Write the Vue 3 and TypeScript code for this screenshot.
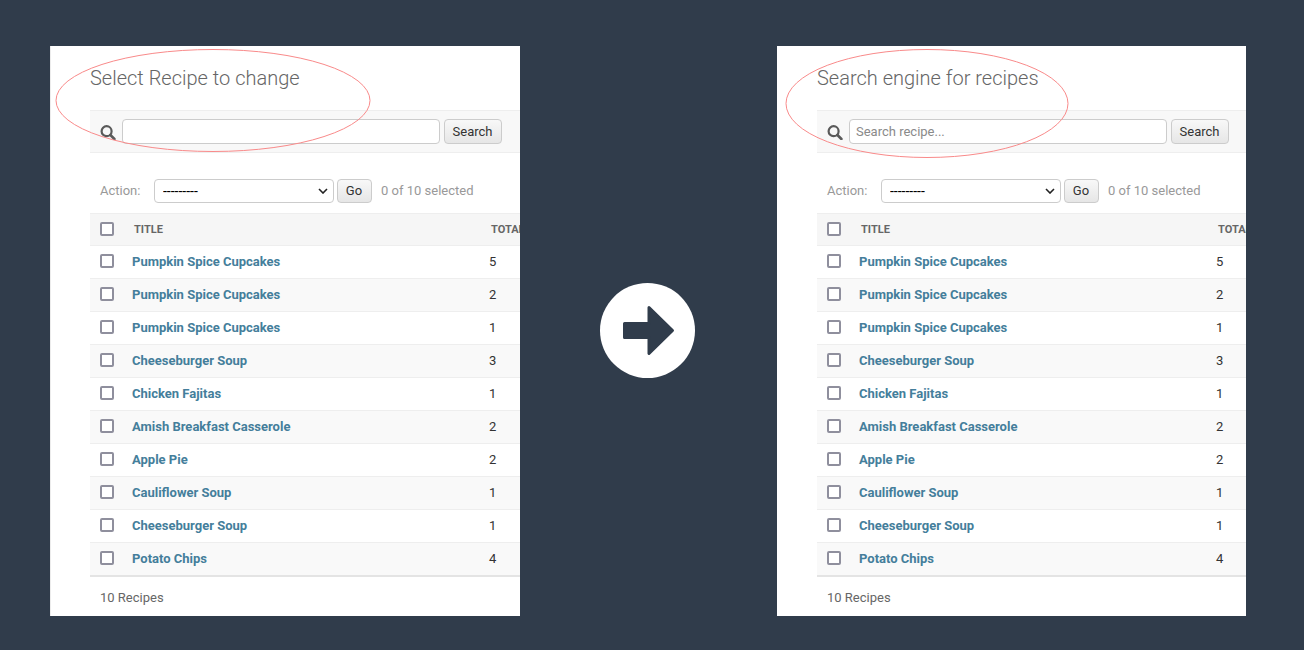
<template>
  <div class="page">
    <section v-for="panel in panels" :key="panel.title" class="panel" :class="panel.side">
      <svg class="ring" :width="panel.ring.rx * 2 + 2" :height="panel.ring.ry * 2 + 3" xmlns="http://www.w3.org/2000/svg">
        <ellipse :cx="panel.ring.rx + 1" :cy="panel.ring.ry + 1.5" :rx="panel.ring.rx" :ry="panel.ring.ry" fill="none" stroke="#f98a8a" stroke-width="1" />
      </svg>
      <h1 class="title">{{ panel.title }}</h1>
      <div class="toolbar">
        <svg class="search-icon" width="16" height="16" viewBox="0 0 16 16" fill="none" xmlns="http://www.w3.org/2000/svg">
          <circle cx="6.6" cy="7.2" r="5" stroke="#5a5a5a" stroke-width="2.2" />
          <path d="M10.4 11L14.4 15" stroke="#5a5a5a" stroke-width="2.6" stroke-linecap="round" />
        </svg>
        <input class="search-input" type="text" :placeholder="panel.placeholder" />
        <button class="btn search-btn">Search</button>
      </div>
      <div class="actions">
        <span class="action-label">Action:</span>
        <select class="action-select">
          <option>---------</option>
        </select>
        <button class="btn go-btn">Go</button>
        <span class="counter">0 of 10 selected</span>
      </div>
      <div class="table">
        <div class="head">
          <input class="check" type="checkbox" />
          <span class="head-title">TITLE</span>
          <span class="head-total">TOTAL</span>
        </div>
        <div v-for="(row, i) in rows" :key="i" class="row" :class="{ odd: i % 2 === 1 }">
          <input class="check" type="checkbox" />
          <a class="row-title">{{ row.name }}</a>
          <span class="row-total">{{ row.total }}</span>
        </div>
      </div>
      <p class="summary">10 Recipes</p>
    </section>

    <div class="arrow">
      <svg width="95" height="95" viewBox="0.5 0.5 95 95" xmlns="http://www.w3.org/2000/svg">
        <path d="M25 41H49.5V25L73 48L49.5 71V55H25Z" fill="#303c4b" stroke="#303c4b" stroke-width="3" stroke-linejoin="round" />
      </svg>
    </div>
  </div>
</template>

<script setup lang="ts">
interface Panel {
  side: string;
  title: string;
  placeholder: string;
  ring: { rx: number; ry: number };
}

const panels: Panel[] = [
  { side: 'left', title: 'Select Recipe to change', placeholder: '', ring: { rx: 157, ry: 51 } },
  { side: 'right', title: 'Search engine for recipes', placeholder: 'Search recipe...', ring: { rx: 141, ry: 54 } },
];

const rows = [
  { name: 'Pumpkin Spice Cupcakes', total: 5 },
  { name: 'Pumpkin Spice Cupcakes', total: 2 },
  { name: 'Pumpkin Spice Cupcakes', total: 1 },
  { name: 'Cheeseburger Soup', total: 3 },
  { name: 'Chicken Fajitas', total: 1 },
  { name: 'Amish Breakfast Casserole', total: 2 },
  { name: 'Apple Pie', total: 2 },
  { name: 'Cauliflower Soup', total: 1 },
  { name: 'Cheeseburger Soup', total: 1 },
  { name: 'Potato Chips', total: 4 },
];
</script>

<style scoped>
.page {
  height: 650px;
  box-sizing: border-box;
  padding: 46px 58px 34px 50px;
  display: flex;
  align-items: flex-start;
  background: #303c4b;
  font-family: Roboto, "Liberation Sans", sans-serif;
  overflow: hidden;
}

.panel {
  position: relative;
  height: 570px;
  box-sizing: border-box;
  padding-left: 40px;
  background: #fff;
  overflow: hidden;
}

.panel.left {
  width: 470px;
  order: 1;
  border-left: 1px solid #ececec;
  padding-left: 39px;
}

.panel.right {
  width: 469px;
  order: 3;
}

.ring {
  position: absolute;
  top: 2px;
  left: 4px;
  pointer-events: none;
  z-index: 2;
}

.right .ring {
  left: 8px;
}

.title {
  margin: 0;
  padding-top: 20px;
  height: 44px;
  font-size: 20px;
  line-height: 24px;
  font-weight: 300;
  color: #666;
}

.toolbar {
  display: flex;
  align-items: center;
  height: 41px;
  border-top: 1px solid #eee;
  border-bottom: 1px solid #eee;
  background: #f8f8f8;
  padding-left: 10px;
}

.search-icon {
  margin-right: 6px;
}

.search-input {
  width: 318px;
  height: 25px;
  box-sizing: border-box;
  padding: 2px 6px;
  border: 1px solid #ccc;
  border-radius: 4px;
  background: #fff;
  font-family: inherit;
  font-size: 13px;
  color: #333;
}

.search-input::placeholder {
  color: #8a8a8a;
}

.btn {
  height: 25px;
  box-sizing: border-box;
  padding: 0 1px 0 0;
  border: 1px solid #ccc;
  border-radius: 4px;
  background: linear-gradient(#f8f8f8, #e6e6e6);
  font-family: inherit;
  font-size: 13px;
  color: #333;
}

.search-btn {
  width: 58px;
  margin-left: 4px;
}

.actions {
  display: flex;
  align-items: center;
  height: 24px;
  margin-top: 26px;
  padding-left: 10px;
  font-size: 13px;
  color: #999;
}

.action-label {
  width: 54px;
  padding-bottom: 2px;
}

.action-select {
  appearance: none;
  width: 180px;
  height: 24px;
  box-sizing: border-box;
  padding: 0 4px 0 8px;
  border: 1px solid #ccc;
  border-radius: 4px;
  background: #fff url("data:image/svg+xml,%3Csvg xmlns='http://www.w3.org/2000/svg' width='10' height='6'%3E%3Cpath d='M1 1L5 5L9 1' fill='none' stroke='%23222' stroke-width='1.6'/%3E%3C/svg%3E") no-repeat right 5px center;
  font-family: inherit;
  font-size: 14px;
  color: #000;
}

.go-btn {
  width: 35px;
  height: 24px;
  margin-left: 3px;
  padding-bottom: 2px;
}

.counter {
  margin-left: 9px;
  padding-bottom: 2px;
}

.table {
  margin-top: 10px;
  border-bottom: 2px solid #e4e4e4;
  width: 440px;
}

.head {
  display: flex;
  align-items: center;
  border-top: 1px solid #eee;
  border-bottom: 1px solid #eee;
  height: 30px;
  padding: 0 0 1px 10px;
  background: #f6f6f6;
  font-size: 11px;
  font-weight: 700;
  color: #666;
}

.head-title {
  width: 357px;
  margin-left: 20px;
}

.row {
  display: flex;
  align-items: center;
  height: 30px;
  padding: 0 0 2px 10px;
  border-bottom: 1px solid #eee;
  font-size: 13px;
  color: #333;
}

.row:last-child {
  border-bottom: none;
}

.row.odd {
  background: #f9f9f9;
}

.check {
  appearance: none;
  width: 14px;
  height: 14px;
  box-sizing: border-box;
  margin: 0;
  flex: none;
  border: 2px solid #8f8f9d;
  border-radius: 2px;
  background: #fff;
}

.row-title {
  width: 357px;
  margin-left: 18px;
  font-weight: 700;
  color: #447e9b;
}

.summary {
  margin: 0;
  padding: 13px 0 0 10px;
  font-size: 13px;
  line-height: 16px;
  color: #666;
}

.arrow {
  order: 2;
  width: 95px;
  height: 95px;
  margin: 237px 82.5px 0 79.5px;
  flex: none;
  border-radius: 50%;
  background: #fff;
}

.arrow svg {
  display: block;
}
</style>
